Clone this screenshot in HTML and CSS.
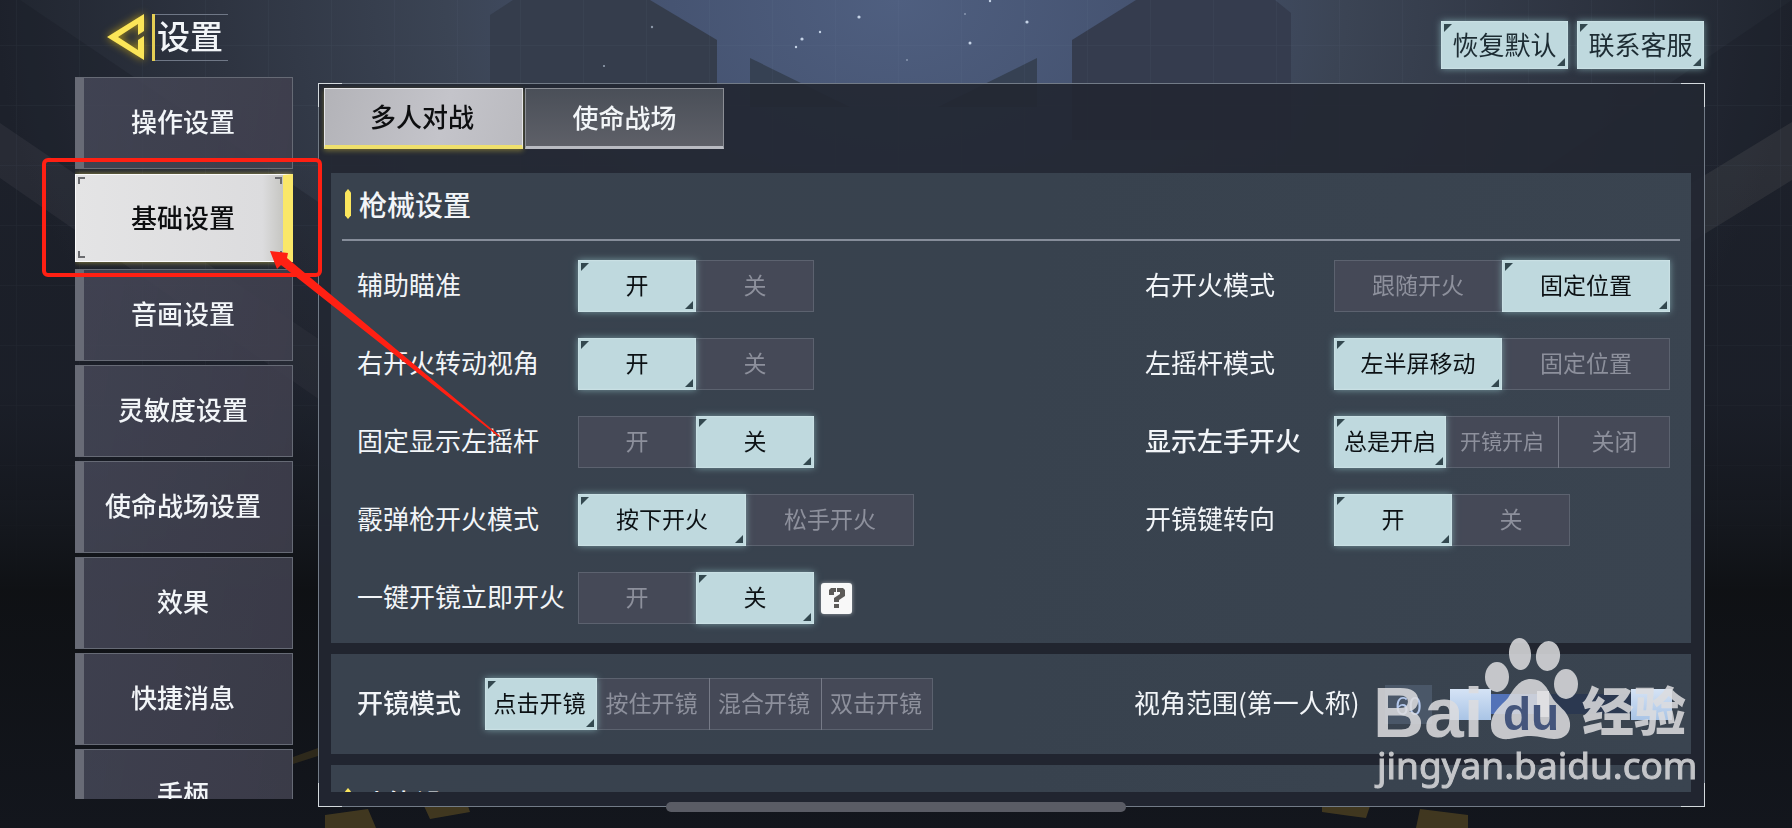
FILE: index.html
```html
<!DOCTYPE html>
<html lang="zh-CN">
<head>
<meta charset="utf-8">
<meta name="viewport" content="width=device-width, initial-scale=1">
<title>设置</title>
<link rel="stylesheet" href="styles.css">
</head>
<body>
<svg class="backdrop" viewBox="0 0 1792 828" preserveAspectRatio="none" aria-hidden="true">
  <defs>
    <radialGradient id="sky" gradientUnits="userSpaceOnUse" cx="896" cy="0" r="900" gradientTransform="matrix(1 0 0 .75 0 0)">
      <stop offset="0" stop-color="#4f5f80"/>
      <stop offset=".25" stop-color="#465472"/>
      <stop offset=".5" stop-color="#3b4454"/>
      <stop offset=".75" stop-color="#2e3441"/>
      <stop offset="1" stop-color="#20252f"/>
    </radialGradient>
    <linearGradient id="floor" x1="0" y1="0" x2="0" y2="1">
      <stop offset="0" stop-color="#0e1014" stop-opacity="0"/>
      <stop offset=".35" stop-color="#151820" stop-opacity=".25"/>
      <stop offset=".65" stop-color="#0e1013" stop-opacity=".95"/>
      <stop offset="1" stop-color="#13161d"/>
    </linearGradient>
    <pattern id="mesh" width="63" height="60" patternUnits="userSpaceOnUse" patternTransform="translate(16 45)">
      <path d="M0 0H63M0 0V60" stroke="#8fa0b8" stroke-width="1" opacity=".08"/>
    </pattern>
  </defs>
  <rect width="1792" height="828" fill="url(#sky)"/>
  <path d="M0 0H20L330 210V500H0Z" fill="#171c26" opacity=".3"/>
  <path d="M1792 0L1440 240V500H1792Z" fill="#171a23" opacity=".3"/>
  <path d="M0 123L320 340V400L0 178Z" fill="#3a3d45" opacity=".4"/>
  <path d="M1792 122L1500 300V360L1792 180Z" fill="#43454c" opacity=".4"/>
  <path d="M490 140V15L513 0H650L717 40V140Z" fill="#353d4c"/>
  <path d="M1291 140V13L1275 0H1136L1072 40V140Z" fill="#353c4e"/>
  <path d="M750 58L850 107H750Z" fill="#364153"/>
  <path d="M1037 58L938 107H1037Z" fill="#364153"/>
  <rect width="1792" height="600" fill="url(#mesh)"/>
  <g fill="#c5d3e6">
    <circle cx="859" cy="17" r="1.6"/><circle cx="1027" cy="22" r="1.6"/><circle cx="802" cy="39" r="1.6"/>
    <circle cx="970" cy="43" r="1.5"/><circle cx="820" cy="32" r="1.2"/><circle cx="796" cy="47" r="1.2"/>
    <circle cx="652" cy="27" r="1.2" opacity=".6"/><circle cx="604" cy="66" r="1" opacity=".7"/>
    <circle cx="990" cy="1" r="1.2"/><circle cx="907" cy="60" r="1" opacity=".5"/><circle cx="965" cy="14" r="1" opacity=".5"/>
  </g>
  <rect y="150" width="1792" height="678" fill="url(#floor)"/>
  <g fill="#5a4b22" opacity=".65">
    <path d="M293 757L318 748V756L293 764Z" opacity=".6"/>
    <path d="M325 815L368 809L376 828H325Z"/>
    <path d="M424 806H468L470 812L430 819Z"/>
    <path d="M1322 806H1370L1366 818L1322 812Z"/>
    <path d="M1420 809L1468 815V828H1416Z"/>
  </g>
</svg>

<div class="page">
  <header class="header">
    <h1 class="title">
      <button class="back" type="button" aria-label="返回">
        <svg width="38" height="46" viewBox="0 0 38 46" aria-hidden="true"><path d="M37 0V17L31 21V10L11 23L31 36V26L37 22V46L0 23Z" fill="#fbe558"/></svg>
      </button>
      <span class="title-text">设置</span>
    </h1>
    <div class="actions">
      <button class="action lit" type="button">恢复默认</button>
      <button class="action lit" type="button">联系客服</button>
    </div>
  </header>

  <div class="body">
    <nav class="sidebar" aria-label="设置分类">
      <button class="nav-item" type="button">操作设置</button>
      <button class="nav-item nav-current" type="button" aria-current="page">基础设置<svg class="brackets" viewBox="0 0 204 81" aria-hidden="true"><path d="M1 7V1H7M197 1H203V7M203 74V80H197M7 80H1V74" fill="none" stroke="#6a6b6f" stroke-width="2"/></svg></button>
      <button class="nav-item" type="button">音画设置</button>
      <button class="nav-item" type="button">灵敏度设置</button>
      <button class="nav-item" type="button">使命战场设置</button>
      <button class="nav-item" type="button">效果</button>
      <button class="nav-item" type="button">快捷消息</button>
      <button class="nav-item" type="button">手柄</button>
    </nav>

    <main class="panel">
      <div class="tabs" role="tablist">
        <button class="tab tab-on" type="button" role="tab" aria-selected="true">多人对战</button>
        <button class="tab" type="button" role="tab" aria-selected="false">使命战场</button>
      </div>

      <div class="sections">
        <section class="section">
          <h2 class="section-title">枪械设置</h2>
          <div class="columns">
            <div class="column">
              <div class="row" role="radiogroup" aria-labelledby="l1">
                <span class="label" id="l1">辅助瞄准</span>
                <div class="seg">
                  <label class="opt"><input type="radio" name="aim" checked><span>开</span></label>
                  <label class="opt"><input type="radio" name="aim"><span>关</span></label>
                </div>
              </div>
              <div class="row" role="radiogroup" aria-labelledby="l2">
                <span class="label" id="l2">右开火转动视角</span>
                <div class="seg">
                  <label class="opt"><input type="radio" name="turn" checked><span>开</span></label>
                  <label class="opt"><input type="radio" name="turn"><span>关</span></label>
                </div>
              </div>
              <div class="row" role="radiogroup" aria-labelledby="l3">
                <span class="label" id="l3">固定显示左摇杆</span>
                <div class="seg">
                  <label class="opt"><input type="radio" name="stick"><span>开</span></label>
                  <label class="opt"><input type="radio" name="stick" checked><span>关</span></label>
                </div>
              </div>
              <div class="row" role="radiogroup" aria-labelledby="l4">
                <span class="label" id="l4">霰弹枪开火模式</span>
                <div class="seg seg-wide">
                  <label class="opt"><input type="radio" name="shotgun" checked><span>按下开火</span></label>
                  <label class="opt"><input type="radio" name="shotgun"><span>松手开火</span></label>
                </div>
              </div>
              <div class="row" role="radiogroup" aria-labelledby="l5">
                <span class="label" id="l5">一键开镜立即开火</span>
                <div class="seg">
                  <label class="opt"><input type="radio" name="quick"><span>开</span></label>
                  <label class="opt"><input type="radio" name="quick" checked><span>关</span></label>
                </div>
                <button class="help" type="button" aria-label="帮助">
                  <svg width="18" height="22" viewBox="0 0 18 22" aria-hidden="true"><path d="M1 8V3L3 1H8V5H6V8ZM9 1H15L17 3V9L11 13V15H6V11L12 7V5H9ZM6 17H11V21H6Z" fill="#5c5a58"/></svg>
                </button>
              </div>
            </div>

            <div class="column column-right">
              <div class="row" role="radiogroup" aria-labelledby="r1">
                <span class="label" id="r1">右开火模式</span>
                <div class="seg seg-wide">
                  <label class="opt"><input type="radio" name="rfire"><span>跟随开火</span></label>
                  <label class="opt"><input type="radio" name="rfire" checked><span>固定位置</span></label>
                </div>
              </div>
              <div class="row" role="radiogroup" aria-labelledby="r2">
                <span class="label" id="r2">左摇杆模式</span>
                <div class="seg seg-wide">
                  <label class="opt"><input type="radio" name="lstick" checked><span>左半屏移动</span></label>
                  <label class="opt"><input type="radio" name="lstick"><span>固定位置</span></label>
                </div>
              </div>
              <div class="row" role="radiogroup" aria-labelledby="r3">
                <span class="label label-strong" id="r3">显示左手开火</span>
                <div class="seg seg-narrow">
                  <label class="opt"><input type="radio" name="lfire" checked><span>总是开启</span></label>
                  <label class="opt opt-small"><input type="radio" name="lfire"><span>开镜开启</span></label>
                  <label class="opt"><input type="radio" name="lfire"><span>关闭</span></label>
                </div>
              </div>
              <div class="row" role="radiogroup" aria-labelledby="r4">
                <span class="label" id="r4">开镜键转向</span>
                <div class="seg">
                  <label class="opt"><input type="radio" name="scope-turn" checked><span>开</span></label>
                  <label class="opt"><input type="radio" name="scope-turn"><span>关</span></label>
                </div>
              </div>
            </div>
          </div>
        </section>

        <section class="section section-scope">
          <div class="row row-scope" role="radiogroup" aria-labelledby="s1">
            <span class="label label-strong" id="s1">开镜模式</span>
            <div class="seg seg-narrow">
              <label class="opt"><input type="radio" name="scope" checked><span>点击开镜</span></label>
              <label class="opt"><input type="radio" name="scope"><span>按住开镜</span></label>
              <label class="opt"><input type="radio" name="scope"><span>混合开镜</span></label>
              <label class="opt"><input type="radio" name="scope"><span>双击开镜</span></label>
            </div>
          </div>
          <div class="fov">
            <label class="label" for="fov">视角范围(第一人称)</label>
            <input class="fov-value" id="fov" type="text" value="60">
            <div class="stepper">
              <button class="step" type="button" aria-label="减少"></button>
              <input class="slider" type="range" min="0" max="100" value="36" aria-label="视角范围">
              <button class="step" type="button" aria-label="增加"></button>
            </div>
          </div>
        </section>

        <section class="section section-last">
          <h2 class="section-title">功能设置</h2>
        </section>
      </div>
      <i class="corner corner-tl"></i><i class="corner corner-tr"></i><i class="corner corner-bl"></i><i class="corner corner-br"></i>
    </main>
  </div>
</div>

<div class="home-bar"></div>

<svg class="callout" width="480" height="310" viewBox="0 0 480 310" aria-hidden="true">
  <rect x="4" y="10" width="276" height="115" rx="4" fill="none" stroke="#ff2013" stroke-width="4"/>
  <path d="M230 101L248 103L247 108L460 286L459 287L241 115L237 119Z" fill="#ff2013"/>
</svg>

<svg class="watermark" width="330" height="170" viewBox="0 0 330 170" role="img" aria-label="Baidu经验 jingyan.baidu.com">
  <g fill="#dcdddf" opacity=".86">
    <text class="wm-brand" x="3" y="106">Bai</text>
    <ellipse cx="127" cy="46" rx="12" ry="15"/>
    <ellipse cx="150" cy="23" rx="11" ry="16" transform="rotate(-4 150 23)"/>
    <ellipse cx="178" cy="25" rx="12" ry="15" transform="rotate(8 178 25)"/>
    <ellipse cx="196" cy="53" rx="12" ry="15"/>
    <path d="M161 48C149 48 144 58 138 67C132 74 121 81 121 94C121 105 129 109 139 108C148 107 152 105 161 105C170 105 176 108 184 108C195 108 201 102 200 92C199 80 187 75 182 66C177 57 173 48 161 48Z"/>
    <text class="wm-cn" x="212" y="100">经验</text>
    <text class="wm-url" x="7" y="148">jingyan.baidu.com</text>
  </g>
  <text class="wm-du" x="133" y="99">du</text>
</svg>
</body>
</html>
```

FILE: styles.css
```css
* {
  box-sizing: border-box;
}

body {
  margin: 0;
  position: relative;
  overflow: hidden;
  background: #14171d;
  color: #f2f5f8;
  font-family: "Noto Sans CJK SC", sans-serif;
  font-size: 26px;
  line-height: 36px;
}

button,
input {
  margin: 0;
  padding: 0;
  border: 0;
  border-radius: 0;
  background: none;
  color: inherit;
  font: inherit;
}

.backdrop {
  position: absolute;
  inset: 0;
  width: 100%;
  height: 100%;
}

.page {
  position: relative;
  display: flex;
  flex-direction: column;
  height: 100vh;
  padding: 0 87px 21px 75px;
}

/* Header */
.header {
  display: flex;
  justify-content: space-between;
  height: 77px;
  flex: none;
  padding: 0 1px 0 32px;
}

.title {
  display: flex;
  align-items: flex-start;
  gap: 7px;
  margin: 0;
  padding-top: 14px;
  font-size: 33px;
  font-weight: 500;
}

.back {
  width: 38px;
  height: 46px;
  filter: drop-shadow(0 0 4px #b39618);
}

.back svg {
  display: block;
}

.title-text {
  height: 47px;
  padding: 0 5px 0 2px;
  border-left: 3px solid #e5cf55;
  background: linear-gradient(#6f7786, #6f7786) top / 100% 1px no-repeat, linear-gradient(#6f7786, #6f7786) bottom / 100% 1px no-repeat;
  line-height: 42px;
}

.actions {
  display: flex;
  gap: 9px;
  padding-top: 21px;
}

.action {
  width: 127px;
  height: 48px;
  padding-bottom: 2px;
  color: #1d2c33;
}

/* Lit controls with notched corners */
.lit,
.opt input:checked + span {
  position: relative;
  background: #bfd9de;
  box-shadow: 0 0 7px rgba(150, 200, 205, 0.65), inset 0 0 2px #e2f4f6;
}

.lit::before,
.lit::after,
.opt input:checked + span::before,
.opt input:checked + span::after {
  content: "";
  position: absolute;
  width: 8px;
  height: 8px;
  background: #33484f;
}

.lit::before,
.opt input:checked + span::before {
  top: 3px;
  left: 3px;
  clip-path: polygon(0 0, 100% 0, 0 100%);
}

.lit::after,
.opt input:checked + span::after {
  right: 3px;
  bottom: 3px;
  clip-path: polygon(100% 0, 100% 100%, 0 100%);
}

/* Body */
.body {
  display: flex;
  gap: 25px;
  flex: 1;
  min-height: 0;
}

.sidebar {
  display: flex;
  flex-direction: column;
  gap: 4px;
  width: 218px;
  flex: none;
  margin-bottom: 8px;
  overflow: hidden;
}

.nav-item {
  height: 92px;
  flex: none;
  padding: 0 10px 4px 0;
  border: 1px solid #666a75;
  border-left: 9px solid #686b76;
  background: linear-gradient(100deg, rgba(70, 72, 88, 0.85), rgba(63, 63, 77, 0.9));
  font-weight: 500;
}

.nav-current {
  position: relative;
  height: 88px;
  margin: 1px 0 3px;
  padding: 0 0 2px 7px;
  border: 1px solid #fbfbfb;
  border-right: 10px solid #fae768;
  background: linear-gradient(90deg, #e4e4e5, #dcdcde 90%, #c6c6c2);
  box-shadow: 0 0 6px rgba(240, 220, 90, 0.6);
  color: #0d0e10;
}

.brackets {
  position: absolute;
  top: 2px;
  left: 2px;
  width: 204px;
  height: 81px;
}

/* Panel */
.panel {
  position: relative;
  display: flex;
  flex-direction: column;
  flex: 1;
  min-width: 0;
  margin-top: 6px;
  padding: 4px 13px 14px 12px;
  border: 1px solid #727b87;
  background: rgba(35, 39, 50, 0.92);
}

.corner {
  position: absolute;
  width: 24px;
  height: 24px;
  border: 0 solid #d4dade;
}

.corner-tl { top: -1px; left: -1px; border-width: 1px 0 0 1px; }
.corner-tr { top: -1px; right: -1px; border-width: 1px 1px 0 0; }
.corner-bl { bottom: -1px; left: -1px; border-width: 0 0 1px 1px; }
.corner-br { bottom: -1px; right: -1px; border-width: 0 1px 1px 0; }

.tabs {
  display: flex;
  gap: 2px;
  flex: none;
  margin: 0 0 24px -7px;
}

.tab {
  width: 199px;
  height: 61px;
  padding-bottom: 2px;
  border: 1px solid #8b8e95;
  border-bottom: 3px solid #b9bbc2;
  background: linear-gradient(#4a4f58, #5e6068);
  font-weight: 500;
}

.tab-on {
  padding-right: 3px;
  border: 1px solid #e5e5e8;
  border-bottom: 4px solid #efe06c;
  background: linear-gradient(105deg, #b3b3b8, #c4c4ca 60%, #bababf);
  box-shadow: 0 2px 5px rgba(200, 180, 60, 0.45);
  color: #0d0e10;
}

.sections {
  display: flex;
  flex-direction: column;
  gap: 11px;
  flex: 1;
  min-height: 0;
  overflow: hidden;
}

.section {
  flex: none;
  padding: 0 11px;
  background: linear-gradient(100deg, #39424e, #38424e 50%, #3a4450);
}

.section-title {
  display: flex;
  align-items: center;
  gap: 8px;
  height: 68px;
  margin: 0;
  padding: 0 0 4px 3px;
  border-bottom: 2px solid #868d9a;
  font-size: 28px;
  font-weight: 500;
}

.section-title::before {
  content: "";
  width: 6px;
  height: 30px;
  background: #fbe65d;
  clip-path: polygon(50% 0, 100% 12%, 100% 88%, 50% 100%, 0 88%, 0 12%);
}

.columns {
  display: flex;
  justify-content: space-between;
  padding: 19px 10px 19px 15px;
}

.column {
  display: flex;
  flex-direction: column;
  gap: 26px;
}

.row {
  display: flex;
  align-items: center;
  height: 52px;
}

.label {
  width: 221px;
  flex: none;
  padding-bottom: 4px;
  white-space: nowrap;
}

.column-right .label {
  width: 189px;
}

.label-strong {
  font-weight: 500;
}

/* Segmented radio groups */
.seg {
  display: flex;
  height: 52px;
  border: 1px solid #5c626f;
  background: #454957;
  font-size: 23px;
}

.opt {
  position: relative;
  width: 118px;
  margin: -1px 0;
  color: #8d909c;
}

.opt:first-child { margin-left: -1px; }
.opt:last-child { margin-right: -1px; }

.seg-wide .opt { width: 168px; }
.seg-narrow .opt { width: 112px; }
.seg-narrow .opt + .opt + .opt { border-left: 1px solid #767a87; }
.seg-narrow .opt-small { font-size: 21px; }

.opt input {
  position: absolute;
  inset: 0;
  opacity: 0;
}

.opt span {
  display: flex;
  align-items: center;
  justify-content: center;
  height: 52px;
  padding-bottom: 4px;
}

.opt input:checked + span {
  color: #0c1114;
}

.help {
  display: grid;
  place-items: center;
  width: 31px;
  height: 31px;
  margin-left: 7px;
  border-radius: 3px;
  background: #f8f8f8;
  box-shadow: 0 0 4px rgba(255, 255, 255, 0.5);
}

/* Scope section */
.section-scope {
  display: flex;
  align-items: center;
  justify-content: space-between;
  height: 100px;
  padding: 0 19px 0 26px;
}

.row-scope .label {
  width: 128px;
}

.row-scope .opt span {
  padding-right: 3px;
}

.fov {
  display: flex;
  align-items: center;
}

.fov .label {
  width: 251px;
}

.fov-value {
  width: 47px;
  height: 39px;
  margin-right: 18px;
  background: #4a5768;
  color: #b4c8ec;
  font-size: 24px;
  text-align: center;
}

.stepper {
  display: flex;
  align-items: center;
}

.step {
  width: 41px;
  height: 31px;
  background: linear-gradient(#d5e3f5, #a9c4e6);
}

.slider {
  width: 140px;
  height: 26px;
  appearance: none;
  background: linear-gradient(90deg, #5272b8 36%, #2b3850 36%) center / 100% 20px no-repeat;
}

.slider::-webkit-slider-thumb {
  appearance: none;
  width: 12px;
  height: 26px;
  background: #edf2f8;
}

.section-last {
  padding-top: 7px;
}

/* Overlays */
.home-bar {
  position: absolute;
  bottom: 16px;
  left: 50%;
  width: 460px;
  height: 10px;
  border-radius: 5px;
  background: #5a5c65;
  transform: translateX(-50%);
}

.callout {
  position: absolute;
  top: 150px;
  left: 40px;
}

.watermark {
  position: absolute;
  right: 92px;
  bottom: 27px;
}

.wm-brand {
  font: bold 71px "Liberation Sans", sans-serif;
}

.wm-du {
  fill: #44557c;
  font: bold 46px "Liberation Sans", sans-serif;
}

.wm-cn {
  font: 900 52px "Noto Sans CJK SC", sans-serif;
}

.wm-url {
  font: 37px "Noto Sans", sans-serif;
  stroke: #dcdddf;
  stroke-width: 1;
}
```
